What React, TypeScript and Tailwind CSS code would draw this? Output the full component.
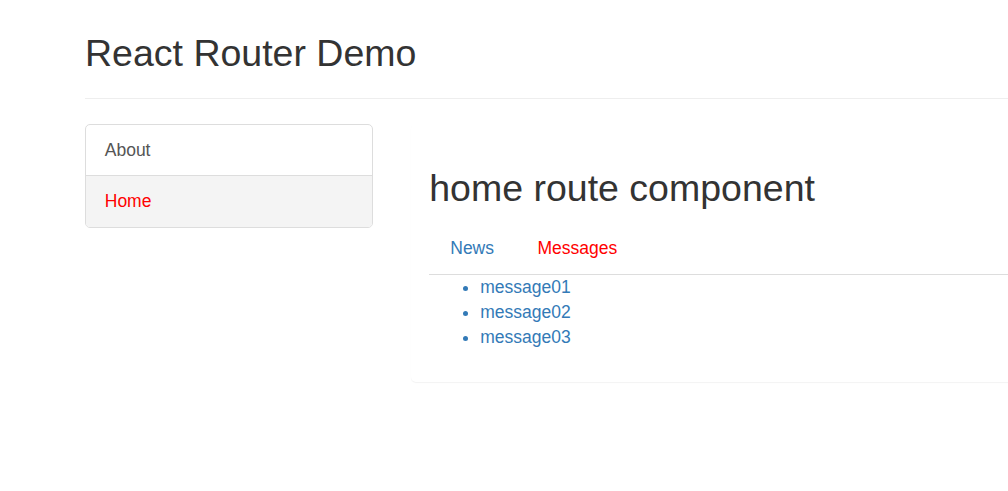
const messages = ["message01", "message02", "message03"];

export default function App() {
  return (
    <div className="min-h-screen overflow-hidden bg-white font-['Liberation_Sans',Arial,sans-serif] text-[17.5px] leading-[25px] text-[#333]">
      <div className="pl-[85px] pt-[33px]">
        <div className="border-b border-[#eee] pb-[11px]">
          <h2 className="mb-[12.5px] text-[37.5px] leading-[41.25px] font-normal">React Router Demo</h2>
        </div>
      </div>

      <div className="mt-[25px] flex items-start pl-[85px]">
        <div className="w-[288px] shrink-0 overflow-hidden rounded-[5px] border border-[#ddd]">
          <a className="block px-[18.75px] pt-[13.5px] pb-[11.5px] text-[#555]">About</a>
          <a className="block border-t border-[#ddd] bg-[#f4f4f4] px-[18.75px] pt-[13.5px] pb-[12.5px] text-[red]">Home</a>
        </div>

        <div className="-mr-6 ml-[37.5px] flex-1 rounded-[5px] bg-white p-[18.75px] pb-[19.5px] shadow-[0_1px_1px_rgba(0,0,0,0.05)]">
          <h2 className="mt-[25px] mb-[13.5px] text-[37.5px] leading-[41.25px] font-normal">home route component</h2>
          <div>
            <ul className="flex border-b border-[#ddd]">
              <li className="mr-[2px] -mb-px">
                <a className="block border border-transparent px-[20px] pt-[13px] pb-[13px] text-[#337ab7]">News</a>
              </li>
              <li className="-mb-px">
                <a className="block border border-transparent pl-[19.5px] pr-[20px] pt-[13px] pb-[13px] text-[red]">Messages</a>
              </li>
            </ul>
            <ul className="mb-[12.5px] list-disc pl-[51px] text-[#337ab7]">
              {messages.map((m) => (
                <li key={m}>
                  <a>{m}</a>
                </li>
              ))}
            </ul>
          </div>
        </div>
      </div>
    </div>
  );
}
